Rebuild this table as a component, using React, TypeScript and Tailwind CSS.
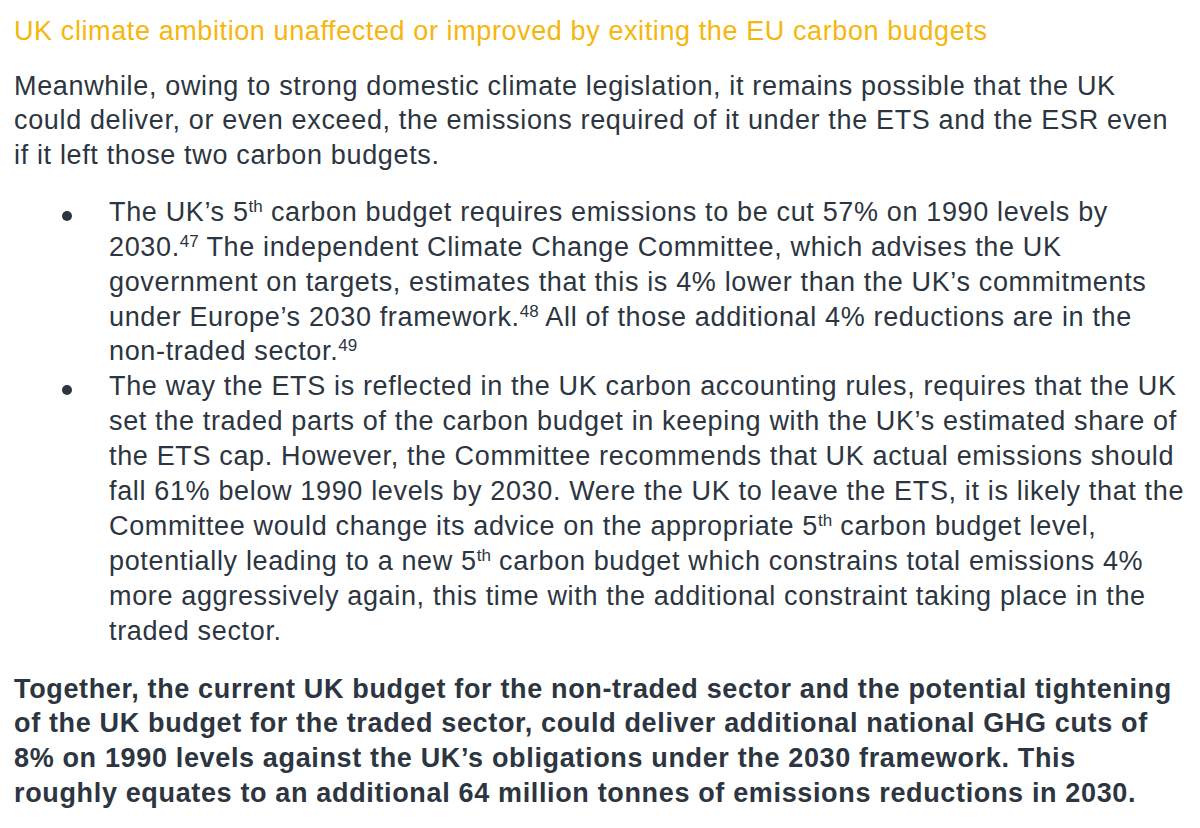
const Sup = ({ children }: { children: React.ReactNode }) => (
  <span className="relative -top-[9px] text-[17px] leading-none tracking-normal align-baseline">{children}</span>
);

const Bullet = ({ lines }: { lines: React.ReactNode[] }) => (
  <li className="flex">
    <span className="w-[95px] shrink-0 pt-[16px]">
      <span className="block w-[10px] h-[10px] rounded-full bg-[#2c3540] ml-[48px]" />
    </span>
    <span className="block">
      {lines.map((l, i) => (
        <span key={i} className="block whitespace-nowrap">
          {l}
        </span>
      ))}
    </span>
  </li>
);

export default function App() {
  return (
    <div
      className="w-[1200px] h-[828px] bg-white text-[#2c3540] pl-[14px] pt-[14px] overflow-hidden tracking-[0.65px]"
      style={{ fontFamily: '"Liberation Sans", Arial, sans-serif' }}
    >
      <h2 className="text-[27px] leading-[34.7px] text-[#f5b60d] whitespace-nowrap tracking-[0.6px]">
        UK climate ambition unaffected or improved by exiting the EU carbon budgets
      </h2>

      <p className="mt-[20px] text-[27px] leading-[34.7px] whitespace-nowrap">
        Meanwhile, owing to strong domestic climate legislation, it remains possible that the UK
        <br />
        could deliver, or even exceed, the emissions required of it under the ETS and the ESR even
        <br />
        if it left those two carbon budgets.
      </p>

      <ul className="mt-[22px] text-[27px] leading-[34.9px]">
        <Bullet
          lines={[
            <>
              The UK’s 5<Sup>th</Sup> carbon budget requires emissions to be cut 57% on 1990 levels by
            </>,
            <>
              2030.<Sup>47</Sup> The independent Climate Change Committee, which advises the UK
            </>,
            <>government on targets, estimates that this is 4% lower than the UK’s commitments</>,
            <>
              under Europe’s 2030 framework.<Sup>48</Sup> All of those additional 4% reductions are in the
            </>,
            <>
              non-traded sector.<Sup>49</Sup>
            </>,
          ]}
        />
        <Bullet
          lines={[
            <>The way the ETS is reflected in the UK carbon accounting rules, requires that the UK</>,
            <>set the traded parts of the carbon budget in keeping with the UK’s estimated share of</>,
            <>the ETS cap. However, the Committee recommends that UK actual emissions should</>,
            <>fall 61% below 1990 levels by 2030. Were the UK to leave the ETS, it is likely that the</>,
            <>
              Committee would change its advice on the appropriate 5<Sup>th</Sup> carbon budget level,
            </>,
            <>
              potentially leading to a new 5<Sup>th</Sup> carbon budget which constrains total emissions 4%
            </>,
            <>more aggressively again, this time with the additional constraint taking place in the</>,
            <>traded sector.</>,
          ]}
        />
      </ul>

      <p className="mt-[23px] text-[27px] leading-[34.7px] font-bold whitespace-nowrap">
        Together, the current UK budget for the non-traded sector and the potential tightening
        <br />
        of the UK budget for the traded sector, could deliver additional national GHG cuts of
        <br />
        8% on 1990 levels against the UK’s obligations under the 2030 framework. This
        <br />
        roughly equates to an additional 64 million tonnes of emissions reductions in 2030.
      </p>
    </div>
  );
}
